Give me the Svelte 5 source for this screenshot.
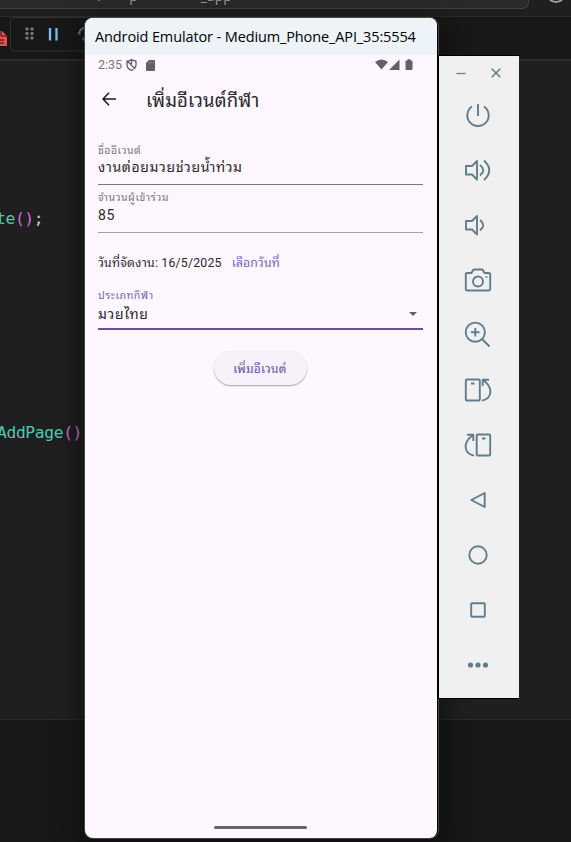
<script>
  const tools = ['power', 'volumeUp', 'volumeDown', 'camera', 'zoom', 'rotateLeft', 'rotateRight', 'back', 'home', 'overview', 'more'];
</script>

<main class="desktop">
  <div class="editor">
    <div class="commandbar">
      <div class="search"><span class="path">/</span><span class="path mid">p</span><span class="path end">_app</span></div>
      <svg class="account" width="30" height="6" viewBox="0 0 30 6"><circle cx="15" cy="-7" r="9" fill="none" stroke="#a0a0a0" stroke-width="2" /></svg>
    </div>
    <div class="tabs">
      <svg width="90" height="42" viewBox="0 0 90 42">
        <path d="M-5 14H2L7 19V29H-5Z" fill="#f14c4c" />
        <path d="M1 14V19H7M-2 23H4M-2 26H4" stroke="#181818" fill="none" />
        <rect x="10.500" y=".5" width="120" height="33.500" rx="4" fill="#181818" stroke="#303030" />
        <g fill="#777">
          {#each [12.5, 17, 21.5] as y}
            <rect x="25.500" y={y - 2} width="3" height="3" rx=".7" /><rect x="30.500" y={y - 2} width="3" height="3" rx=".7" />
          {/each}
        </g>
        <path d="M50 11V23.500M56.500 11V23.500" stroke="#75beff" stroke-width="2.300" />
        <path d="M78 16.500H80.500M79 16Q80.500 10.500 87 10.500" fill="none" stroke="#707070" stroke-width="1.900" />
        <circle cx="84.500" cy="22" r="2" fill="#707070" />
      </svg>
    </div>
    <div class="code">
      <pre class="line one"><span>te</span><b>()</b>;</pre>
      <pre class="line two"><span>AddPage</span><b>()</b></pre>
    </div>
    <div class="panel"></div>
  </div>

  <section class="emulator">
    <header><span>Android Emulator - Medium_Phone_API_35:5554</span></header>
    <div class="screen">
      <div class="status">
        <span class="clock">2:35</span>
        <svg width="11" height="12" viewBox="0 0 11 12" fill="none" stroke="#625f65" stroke-width="1.300"><path d="M2.500 1.800L5.500 .8L10 2.300V5.500Q10 7.500 8.800 9M7.500 10.300L5.500 11.300C3 10.500 1 8.300 1 5.500V2.300M1 1.500L9 10M5.500 1V5" /></svg>
        <svg class="sd" width="9" height="11" viewBox="0 0 9 11"><path d="M3 0H8Q9 0 9 1V10Q9 11 8 11H1Q0 11 0 10V3Z" fill="#625f65" /><path d="M3.500 1.500V3.500M5.300 1.500V3.500M7.100 1.500V3.500" stroke="#aaa5ac" stroke-width=".6" /></svg>
        <svg class="signals" width="38" height="12" viewBox="0 0 38 12" fill="#625f65"><path d="M0 3Q6.500-2 13 3L6.500 10.500ZM14 11L24.500 .5V11ZM32.500 .3H35.500V1.500H36.500Q37.500 1.500 37.500 2.500V10Q37.500 11 36.500 11H31.500Q30.500 11 30.500 10V2.500Q30.500 1.500 31.500 1.500H32.500Z" /></svg>
      </div>
      <div class="appbar">
        <svg width="14" height="14" viewBox="0 0 14 14" fill="none" stroke="#1d1b20" stroke-width="1.600"><path d="M7 .8L1 7L7 13.200M1 7H14" /></svg>
        <h1>เพิ่มอีเวนต์กีฬา</h1>
      </div>
      <form>
        <div class="field first"><label for="name">ชื่ออีเวนต์</label><div class="value" id="name">งานต่อยมวยช่วยน้ำท่วม</div></div>
        <div class="field second"><label for="count">จำนวนผู้เข้าร่วม</label><div class="value" id="count">85</div></div>
        <div class="date"><span>วันที่จัดงาน: 16/5/2025</span><a href="#date">เลือกวันที่</a></div>
        <div class="field third"><label for="type">ประเภทกีฬา</label><div class="value" id="type"><span>มวยไทย</span><i></i></div></div>
        <button type="button">เพิ่มอีเวนต์</button>
      </form>
      <div class="pill"></div>
    </div>
  </section>

  <aside>
    <div class="controls">
      <svg width="10" height="10" viewBox="0 0 10 10"><path d="M.5 5.500H9.500" stroke-width="1.300" /></svg>
      <svg width="10" height="10" viewBox="0 0 10 10"><path d="M.7 .7L9.300 9.300M9.300 .7L.7 9.300" stroke-width="1.500" /></svg>
    </div>
    {#each tools as tool}
      <div class="tool">
        <svg width="30" height="30" viewBox="-15 -15 30 30">
          {#if tool === 'power'}
            <path d="M0-11V1M-6-8.500A10.700 10.700 0 1 0 6-8.500" />
          {:else if tool === 'volumeUp' || tool === 'volumeDown'}
            <path d="M-1-9V9.500L-6 4.500H-12V-4H-6Z" />
            <path d="M2-5Q8.500 .3 2 5.500" />
            {#if tool === 'volumeUp'}<path d="M6-9.500Q16.500 .3 6 10" />{/if}
          {:else if tool === 'camera'}
            <path d="M-10.500-7H-6.500L-4.500-10.500H4.500L6.500-7H10.500Q12.200-7 12.200-5.500V9Q12.200 10.500 10.500 10.500H-10.500Q-12.200 10.500-12.200 9V-5.500Q-12.200-7-10.500-7Z" /><circle cx="0" cy="1.500" r="5" /><circle class="solid" cx="8.500" cy="-3" r="1" />
          {:else if tool === 'zoom'}
            <circle cx="-2.700" cy="-2.800" r="9.600" /><path d="M4.500 4.500L11.500 11.500M-7-2.800H1.500M-2.700-7V1.500" />
          {:else if tool === 'rotateLeft'}
            <rect x="-12.200" y="-10.500" width="14" height="21" rx="1" /><path d="M-7-6.500H-3.500M4.700-4V-10.300H11M5-10C15-3 15 8 4 10.700" />
          {:else if tool === 'rotateRight'}
            <rect x="-1.300" y="-10.500" width="13.500" height="21" rx="1" /><path d="M4-6.500H7.500M-4.700-4V-10.300H-11M-5-10C-15-3-15 8-4 10.700" />
          {:else if tool === 'back'}
            <path d="M6.700-7V7L-6.700 0Z" />
          {:else if tool === 'home'}
            <circle cx="0" cy="0" r="8.700" />
          {:else if tool === 'overview'}
            <rect x="-6.800" y="-6.800" width="13.600" height="13.600" rx=".7" />
          {:else}
            <circle class="solid" cx="-7.500" cy="0" r="2.600" /><circle class="solid" cx="0" cy="0" r="2.600" /><circle class="solid" cx="7.500" cy="0" r="2.600" />
          {/if}
        </svg>
      </div>
    {/each}
  </aside>
</main>

<style>
  :global(body) { margin: 0; background: #1f1f1f; }
  .desktop { --thai: Roboto, "Noto Sans Thai Looped", "Noto Looped Thai", "Loma", "Garuda", "Waree", "Noto Sans Thai", sans-serif; position: relative; width: 571px; height: 842px; overflow: hidden; font-family: var(--thai); }
  .editor { height: 100%; display: flex; flex-direction: column; background: #1f1f1f; }
  .commandbar { height: 17px; box-sizing: border-box; background: #1f1f1f; border-bottom: 1px solid #2b2b2b; display: flex; justify-content: space-between; }
  .search { width: 528px; height: 8px; border: 1px solid #424242; border-width: 0 1px 1px 0; border-radius: 0 0 7px 0; background: #2a2a2a; overflow: hidden; display: flex; }
  .path { margin: -12px 0 0 98px; font: 14px/16px "Open Sans", sans-serif; color: #a0a0a0; }
  .path.mid { margin-left: 26px; }
  .path.end { margin-left: 63px; }
  .tabs { height: 42px; background: #181818; border-bottom: 2px solid #2b2b2b; display: flex; }
  .code { height: 658px; box-sizing: border-box; padding-top: 147px; }
  .line { margin: 0; height: 22px; font: 16.300px/22px "DejaVu Sans Mono", monospace; color: #ccc; letter-spacing: -.35px; }
  .line span { color: #4ec9b0; }
  .line b { color: #d16ad6; font-weight: 400; }
  .one { margin-left: -4px; }
  .two { margin: 192px 0 0 -3px; }
  .panel { flex: 1; background: #181818; border-top: 1px solid #2b2b2b; }

  .emulator { position: absolute; left: 85px; top: 18px; width: 352px; height: 820px; border-radius: 8px; overflow: hidden; background: #fef7ff; box-shadow: 0 0 0 1px #444, 0 8px 26px 8px rgba(0, 0, 0, .4); border-right: 1px solid #000; }
  header { height: 37px; background: #edf3f8; color: #000; font: 14.500px/37px "Open Sans", sans-serif; letter-spacing: -.12px; padding-left: 10px; white-space: nowrap; }
  .screen { height: 783px; display: flex; flex-direction: column; color: #2a282d; }
  .status { height: 20px; display: flex; align-items: center; padding: 0 24px 0 13px; color: #78747b; }
  .clock { width: 28px; font-size: 12.500px; line-height: 20px; }
  .sd { margin-left: 9px; }
  .signals { margin-left: auto; }
  .appbar { height: 50px; display: flex; align-items: center; padding-left: 17px; }
  .appbar svg { margin-top: -2px; }
  h1 { margin: 2px 0 0 30px; font-size: 18.500px; font-weight: 400; line-height: 30px; letter-spacing: .15px; white-space: nowrap; }
  form { margin: 0 14px 0 13px; display: flex; flex-direction: column; }
  .field { display: flex; flex-direction: column; white-space: nowrap; box-sizing: border-box; border-bottom: 1px solid #79747e; }
  .field label { height: 16px; line-height: 16px; font-size: 10.500px; letter-spacing: .5px; color: #78747b; }
  .value { height: 20px; line-height: 20px; font-size: 14px; letter-spacing: .65px; }
  .first { margin-top: 16px; height: 44px; }
  .first label { padding-top: 1px; height: 15px; line-height: 17px; }
  .second { margin-top: 5px; height: 43px; border-color: #a39ea8; }
  .second .value { line-height: 18px; }
  .date { height: 20px; margin-top: 20px; line-height: 20px; font-size: 12.300px; display: flex; gap: 10px; white-space: nowrap; letter-spacing: .2px; }
  .date a { color: #7a66b0; text-decoration: none; letter-spacing: .1px; }
  .third { margin-top: 15px; height: 42px; border-bottom: 2px solid #6750a4; }
  .third label { color: #7a66b0; }
  .third .value { display: flex; justify-content: space-between; align-items: center; }
  .third i { border: 4.500px solid transparent; border-top-color: #625f65; border-bottom: 0; margin-right: 6px; }
  button { align-self: center; margin: 21px 1px 0 0; width: 93px; height: 34px; border: 0; border-radius: 17px; background: #f7f2fa; box-shadow: 0 1px 1.500px rgba(0, 0, 0, .35); color: #6750a4; font: 400 12px/36px var(--thai); letter-spacing: .25px; padding: 0; white-space: nowrap; }
  .pill { margin: auto 0 9px 129px; width: 93px; height: 3px; border-radius: 2px; background: #67636a; }

  aside { position: absolute; left: 438px; top: 55px; width: 81px; height: 644px; box-sizing: border-box; background: #f0f0f0; border: solid #000; border-width: 1px 0 1px 1px; display: flex; flex-direction: column; }
  aside svg { fill: none; stroke: #607d8b; stroke-width: 1.900; stroke-linejoin: round; }
  aside svg .solid { fill: #607d8b; stroke: none; }
  .controls { height: 31px; padding: 3px 18px 0 17px; display: flex; justify-content: space-between; align-items: center; box-sizing: border-box; }
  .tool { height: 55px; display: flex; align-items: center; justify-content: center; margin-left: -2px; }
</style>
